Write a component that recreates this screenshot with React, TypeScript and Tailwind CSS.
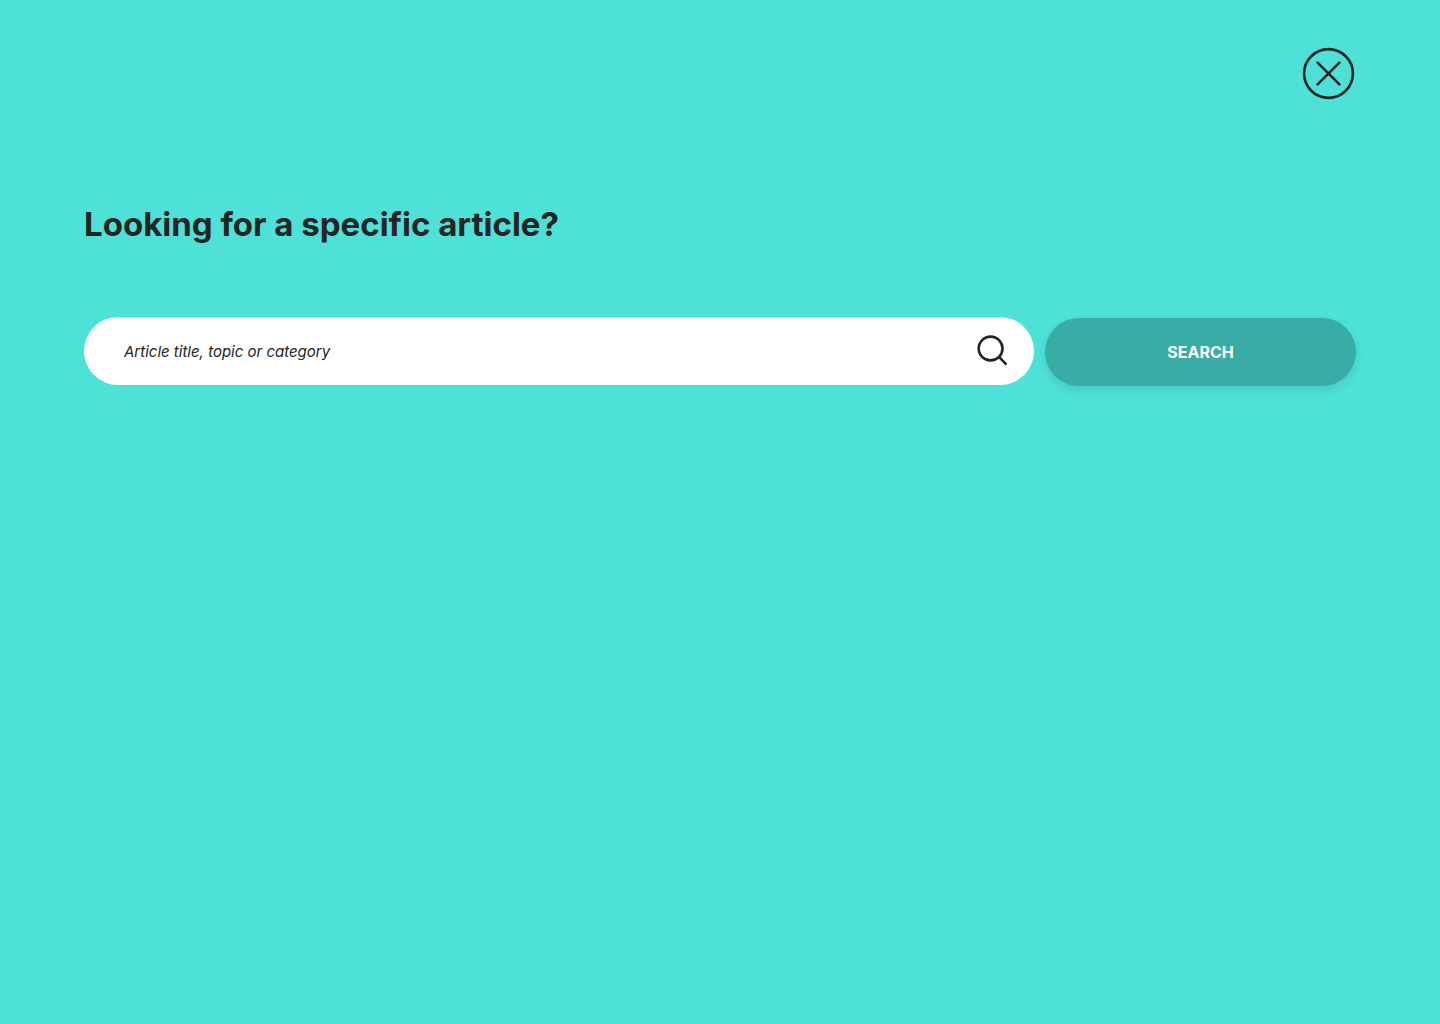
import { useState } from "react";

function CloseIcon() {
  return (
    <svg viewBox="0 0 55 55" className="block size-[55px]" fill="none" stroke="currentColor" strokeWidth="2.6" strokeLinecap="round" aria-hidden="true">
      <circle cx="27.5" cy="27.5" r="24.4" />
      <path d="M16.6 16.6 38.4 38.4M38.4 16.6 16.6 38.4" />
    </svg>
  );
}

function SearchIcon() {
  return (
    <svg viewBox="0 0 32 32" className="block size-8 shrink-0" fill="none" stroke="currentColor" strokeWidth="2.6" strokeLinecap="round" aria-hidden="true">
      <circle cx="14.6" cy="13.5" r="11.9" />
      <path d="M23.2 22.2 29.8 28.8" />
    </svg>
  );
}

export default function App() {
  const [query, setQuery] = useState("");

  return (
    <main className="flex min-h-screen flex-col bg-[#4de1d7] px-[84px] pt-[46px] font-['Inter',sans-serif] text-[#242424]">
      <button type="button" aria-label="Close search" className="cursor-pointer self-end rounded-full">
        <CloseIcon />
      </button>

      <h1 className="mt-[98px] text-[33px] leading-[50px] font-bold">
        <label htmlFor="article-search">Looking for a specific article?</label>
      </h1>

      <form className="mt-[68px] flex items-start gap-[11px]" onSubmit={(event) => event.preventDefault()}>
        <div className="flex h-[68px] min-w-0 flex-1 items-center rounded-full bg-white pr-[26px] pl-10">
          <input
            id="article-search"
            type="text"
            value={query}
            onChange={(event) => setQuery(event.target.value)}
            placeholder="Article title, topic or category"
            className="h-full min-w-0 flex-1 bg-transparent text-[15px] italic outline-none placeholder:text-[#242424] placeholder:opacity-100"
          />
          <SearchIcon />
        </div>
        <button
          type="submit"
          className="mt-px h-[68px] w-[311px] shrink-0 cursor-pointer rounded-full bg-[#39aca5] text-base font-bold text-white shadow-[0_4px_10px_rgba(0,0,0,0.1)]"
        >
          SEARCH
        </button>
      </form>
    </main>
  );
}
